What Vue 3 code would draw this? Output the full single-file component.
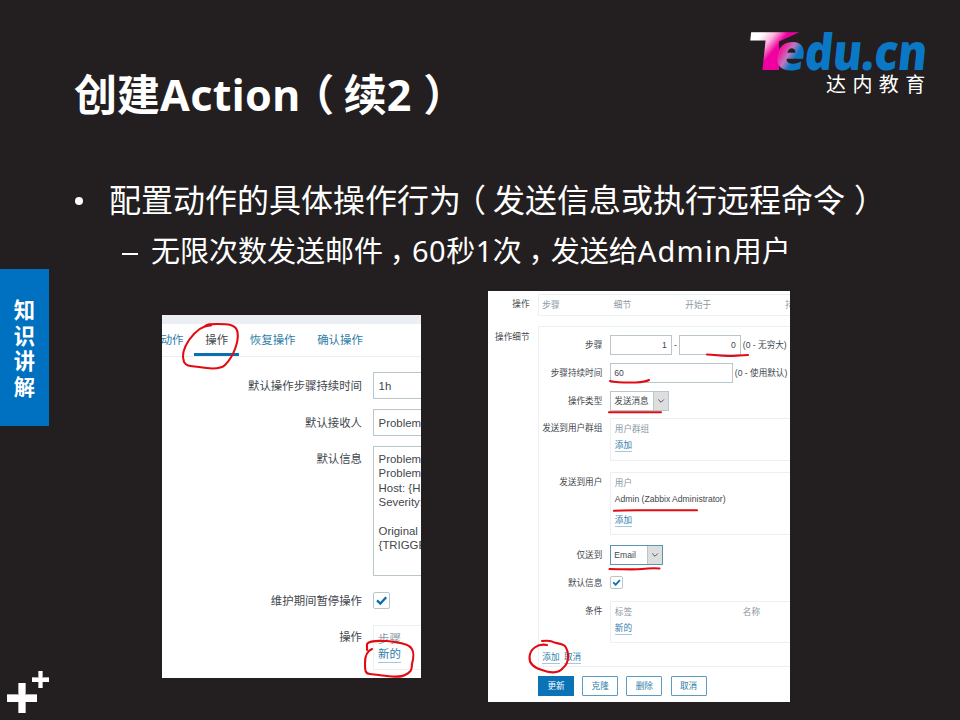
<script setup>
const sideChars = ['知', '识', '讲', '解']
const tabs = [
  { text: '动作', active: false },
  { text: '操作', active: true },
  { text: '恢复操作', active: false },
  { text: '确认操作', active: false }
]
const message = `Problem
Problem
Host: {H
Severity:

Original
{TRIGGE`
const buttons = ['克隆', '删除', '取消']
</script>

<template>
  <div class="slide">
    <aside class="side">
      <div class="side-tab">
        <span v-for="c in sideChars" :key="c">{{ c }}</span>
      </div>
      <svg class="pluses" width="42" height="42" viewBox="0 0 42 42" shape-rendering="crispEdges">
        <path class="plus-edge" d="M11 12h8v11h11v8H19v11h-8V31H0v-8h11z M31 0h5v6h6v5h-6v6h-5v-6h-6V6h6z" />
        <path class="plus" d="M12 12h6v12h12v7H18v11h-6V31H0v-7h12z M32 0h3v7h7v4h-7v6h-3v-6h-7V7h7z" />
      </svg>
    </aside>

    <main class="main">
      <header class="head">
        <h1>创建<span class="title-latin">Action</span><span class="open">（</span>续2<span class="close">）</span></h1>
        <svg class="logo" width="184" height="76" viewBox="0 0 184 76">
          <defs>
            <linearGradient id="gt" gradientUnits="userSpaceOnUse" x1="6" y1="-38" x2="34" y2="-18">
              <stop offset="0.2" stop-color="#ffffff" />
              <stop offset="0.5" stop-color="#fbb4dc" />
              <stop offset="0.8" stop-color="#f000a0" />
              <stop offset="1" stop-color="#f000a0" />
            </linearGradient>
            <linearGradient id="ge" gradientUnits="userSpaceOnUse" x1="0" y1="-18" x2="28" y2="-4">
              <stop offset="0.1" stop-color="#f5149b" />
              <stop offset="0.4" stop-color="#c078c0" />
              <stop offset="0.65" stop-color="#0a78c4" />
            </linearGradient>
            <clipPath id="taper"><path d="M0 0H56V5L33 15.500V50H0z" /></clipPath>
          </defs>
          <g clip-path="url(#taper)">
            <text class="logo-t" transform="translate(-1 44) skewX(-6)" textLength="52" lengthAdjust="spacingAndGlyphs" fill="url(#gt)">T</text>
          </g>
          <text class="logo-w" transform="translate(28 44) skewX(-6)" textLength="30" lengthAdjust="spacingAndGlyphs" fill="url(#ge)">e</text>
          <text class="logo-w" transform="translate(57.500 44) skewX(-6)" textLength="122" lengthAdjust="spacingAndGlyphs" fill="#0a78c4">du.cn</text>
          <text class="logo-cn" x="80" y="66">达内教育</text>
        </svg>
      </header>

      <ul class="points">
        <li class="lv1">
          <i class="dot"></i>
          <p>配置动作的具体操作行为<span class="open">（</span>发送信息或执行远程命令<span class="close">）</span></p>
        </li>
        <li class="lv2">
          <i class="dash"></i>
          <p>无限次数发送邮件<span class="comma">，</span><span class="digits">60秒1</span>次<span class="comma">，</span>发送给<span class="admin">Admin</span>用户</p>
        </li>
      </ul>

      <div class="shots">
        <section class="panel panel-a">
          <div class="strip"></div>
          <nav class="tabs">
            <span v-for="t in tabs" :key="t.text" class="tab" :class="{ active: t.active }">{{ t.text }}</span>
          </nav>
          <div class="row a1"><label>默认操作步骤持续时间</label><div class="field">1h</div></div>
          <div class="row a2"><label>默认接收人</label><div class="field">Problem</div></div>
          <div class="row a3"><label>默认信息</label><div class="area">{{ message }}</div></div>
          <div class="row a4">
            <label>维护期间暂停操作</label>
            <div class="check"><svg viewBox="0 0 16 16"><path d="M3.2 7.8 6.8 11.2 13 4.6" /></svg></div>
          </div>
          <div class="row a5">
            <label>操作</label>
            <div class="box"><span class="muted">步骤</span><a class="link">新的</a></div>
          </div>
          <svg class="marks" width="259" height="363" viewBox="0 0 259 363">
            <path d="M49 10.500C40 10 32 18 27 25C21 34 20 42 22 47C25 52 29 51 37 52C48 54 59 54 63 50C72 41 77 26 75.500 17C74 9 65 9 55 9C49 9 45 9 42 12" />
            <path d="M210 334C205 336 203 341 203 348C203 355 203 359 208 359C220 360 236 364 243 360C249 357 250 355 250 349C252 342 252 334 247 331C243 328 234 327 225 326C216 326 207 325 205 329L205 335" />
          </svg>
        </section>

        <section class="panel panel-b">
          <div class="row b0">
            <label>操作</label>
            <div class="thead"><span>步骤</span><span>细节</span><span>开始于</span><span>持续时间</span></div>
          </div>
          <div class="row b1">
            <label>操作细节</label>
            <div class="detail">
              <div class="row d1">
                <label>步骤</label>
                <div class="field num">1</div><span class="sep">-</span><div class="field num">0</div>
                <span class="hint">(0 - 无穷大)</span>
              </div>
              <div class="row d2">
                <label>步骤持续时间</label><div class="field wide">60</div><span class="hint">(0 - 使用默认)</span>
              </div>
              <div class="row d3">
                <label>操作类型</label>
                <div class="select"><span>发送消息</span><b><svg viewBox="0 0 8 8"><path d="M1.200 2.500 4 5.300 6.800 2.500" /></svg></b></div>
              </div>
              <div class="row d4">
                <label>发送到用户群组</label>
                <div class="box"><span class="muted">用户群组</span><a class="link">添加</a></div>
              </div>
              <div class="row d5">
                <label>发送到用户</label>
                <div class="box">
                  <span class="muted">用户</span><span class="person">Admin (Zabbix Administrator)</span><a class="link last">添加</a>
                </div>
              </div>
              <div class="row d6">
                <label>仅送到</label>
                <div class="select mail"><span>Email</span><b><svg viewBox="0 0 8 8"><path d="M1.200 2.500 4 5.300 6.800 2.500" /></svg></b></div>
              </div>
              <div class="row d7">
                <label>默认信息</label>
                <div class="check"><svg viewBox="0 0 16 16"><path d="M3.200 7.800 6.800 11.200 13 4.600" /></svg></div>
              </div>
              <div class="row d8">
                <label>条件</label>
                <div class="box">
                  <div class="cols muted"><span>标签</span><span>名称</span></div>
                  <a class="link">新的</a>
                </div>
              </div>
              <div class="acts"><a class="link">添加</a><a class="link">取消</a></div>
            </div>
          </div>
          <div class="btns">
            <button class="btn primary">更新</button>
            <button v-for="b in buttons" :key="b" class="btn">{{ b }}</button>
          </div>
          <svg class="marks" width="302" height="411" viewBox="0 0 302 411">
            <path d="M219 63.500C226 63.500 232 65 240 65C248 65 254 64 260 64" />
            <path d="M122 90C131 92 142 91.500 148 91.500C155 91 158 90.500 161 89" />
            <path d="M121 121.300H173" />
            <path d="M126 219.800C136 219 150 219.300 161 219.300H209" />
            <path d="M121.500 278C134 278 145 279 154 278C162 277 166 277 171.500 277.500" />
            <path d="M59 354C50 352 42 358 41.500 366C41 373 47 377 54 379C61 382 70 383 75 377C82 371 81 361 77 355C72 351 67 353 64 350.500C61 349.500 58 349.700 54 350" />
          </svg>
        </section>
      </div>
    </main>
  </div>
</template>

<style>
body {
  margin: 0;
  background: #231f20;
}
</style>

<style scoped>
* {
  box-sizing: border-box;
}
.slide {
  width: 960px;
  height: 720px;
  display: flex;
  overflow: hidden;
  background: #231f20;
  color: #fff;
  font-family: "Noto Sans", "Noto Sans CJK SC", sans-serif;
}
.side {
  width: 49px;
  flex: none;
  display: flex;
  flex-direction: column;
  justify-content: space-between;
  padding: 269px 0 7px;
}
.side-tab {
  height: 157px;
  background: #0070c0;
  display: flex;
  flex-direction: column;
  align-items: center;
  padding-top: 27px;
  font-family: "Noto Sans CJK SC", sans-serif;
  font-size: 21.3px;
  font-weight: 700;
  line-height: 25.6px;
}
.pluses {
  display: block;
  margin-left: 7px;
}
.plus { fill: #fff; }
.plus-edge { fill: #b0aeaf; }
.main {
  flex: 1;
  min-width: 0;
}
.head {
  display: flex;
  justify-content: space-between;
  align-items: flex-start;
  height: 176px;
  padding: 26px 30px 0 25px;
}
h1 {
  margin: 39px 0 0;
  font-size: 43px;
  line-height: 60px;
  font-weight: 700;
  white-space: nowrap;
}
.title-latin { letter-spacing: 0.4px; }
.open { margin: 0 0.22em 0 -0.22em; }
.close { margin-left: 0.28em; }
.comma { margin: 0 -0.23em 0 0.23em; }
.logo {
  display: block;
  overflow: visible;
}
.logo-t, .logo-w {
  font-family: "Noto Sans", sans-serif;
  font-weight: 900;
}
.logo-t { font-size: 53px; }
.logo-w { font-size: 50px; }
.logo-cn {
  font-family: "Noto Sans CJK SC", sans-serif;
  font-size: 20px;
  letter-spacing: 6.4px;
  fill: #fff;
}
.points {
  list-style: none;
  margin: 0;
  padding: 0;
  height: 115px;
  white-space: nowrap;
}
.points li {
  display: flex;
  align-items: center;
}
.points p { margin: 0; }
.lv1 {
  height: 50px;
  padding: 0 0 6px 26px;
  font-size: 32px;
}
.lv2 {
  height: 50px;
  padding: 0 0 4px 73px;
  font-size: 29px;
}
.dot {
  width: 8px;
  height: 8px;
  border-radius: 50%;
  background: #fff;
  margin: 5px 26px 0 0;
}
.dash {
  width: 16px;
  height: 2px;
  background: #fff;
  margin: 9px 13px 0 0;
}
.digits { letter-spacing: 0.5px; }
.admin { letter-spacing: 1.2px; }
.shots {
  display: flex;
  align-items: flex-start;
  gap: 67px;
  padding-left: 113px;
}
.panel {
  position: relative;
  overflow: hidden;
  background: #fff;
  color: #3f474d;
  font-family: "Liberation Sans", "Noto Sans CJK SC", sans-serif;
  white-space: nowrap;
}
.panel-a {
  width: 259px;
  height: 363px;
  margin-top: 24px;
  font-size: 11.4px;
  line-height: 16px;
}
.panel-b {
  width: 302px;
  height: 411px;
  font-size: 8.6px;
  line-height: 12px;
}
.marks {
  position: absolute;
  left: 0;
  top: 0;
}
.marks path {
  fill: none;
  stroke: #e30b13;
  stroke-width: 2.1;
  stroke-linecap: round;
  stroke-linejoin: round;
}
.row {
  display: flex;
  align-items: flex-start;
}
.row label {
  flex: none;
  text-align: right;
}
.field, .area, .select {
  border: 1px solid #b9c6cb;
  flex: none;
}
.box {
  border: 1px solid #edf0f1;
  display: flex;
  flex-direction: column;
  align-items: flex-start;
  flex: none;
}
.muted { color: #8a979f; }
.link {
  color: #2f7da8;
  border-bottom: 1px solid #a6c8db;
}
.check {
  border: 1px solid #b9c6cb;
  border-radius: 2px;
  flex: none;
}
.check svg {
  display: block;
  width: 100%;
  height: 100%;
}
.check path {
  fill: none;
  stroke: #0a6fae;
  stroke-width: 2.5;
}

.strip {
  height: 9px;
  background: #ebeef2;
}
.tabs {
  display: flex;
  height: 33px;
  border-bottom: 1px solid #ebedee;
  margin-left: -12.2px;
}
.tab {
  padding: 8px 10.9px 0;
  height: 32px;
  color: #2f7da8;
  border-bottom: 3px solid transparent;
}
.tab.active {
  color: #3f474d;
  border-color: #0a6fae;
}
.panel-a label { width: 200px; margin-right: 10.6px; }
.panel-a .field {
  width: 120px;
  height: 27px;
  padding: 5px;
}
.a1 { margin-top: 15px; height: 37px; }
.a1 label, .a2 label { padding-top: 5.5px; }
.a2 { height: 37px; }
.area {
  width: 120px;
  height: 130px;
  padding: 5px;
  line-height: 14.4px;
  white-space: pre;
}
.a3 { height: 146px; }
.a3 label { padding-top: 5px; }
.a4 { height: 33px; }
.a4 label { padding-top: 1px; }
.panel-a .check { width: 17px; height: 17px; }
.panel-a .box {
  width: 120px;
  height: 45px;
  padding: 5px 4.5px 0;
}
.panel-a .a5 label { padding-top: 4px; }
.panel-a .box .link { line-height: 15px; margin-top: 0; }

.b0 > label, .b1 > label { width: 41.5px; margin-right: 8.8px; }
.b0 { height: 25px; padding-top: 3px; }
.b0 > label { padding-top: 4px; }
.thead {
  width: 300px;
  height: 22px;
  border: 1px solid #edf0f1;
  padding: 4px 0 0 3px;
  display: grid;
  grid-template-columns: 71.5px 71.5px 100px 60px;
  color: #8a979f;
}
.b1 { margin-top: 10px; height: 341px; }
.b1 > label { padding-top: 4.5px; }
.detail {
  width: 300px;
  height: 341px;
  border: 1px solid #edf0f1;
}
.detail .row label { width: 63px; margin-right: 8px; }
.panel-b .field { height: 20px; padding: 3px; }
.num { width: 61.5px; text-align: right; }
.panel-b .num { padding-right: 4px; }
.sep { width: 7.5px; text-align: center; padding-top: 4px; }
.hint { margin-left: 2px; padding-top: 4px; }
.wide { width: 122.5px; }
.d1 { margin-top: 8px; height: 28px; }
.d2 { height: 28px; }
.d3 { height: 27px; }
.d1 label, .d2 label, .d3 label, .d6 label { padding-top: 4px; }
.select {
  display: flex;
  width: 58.5px;
  height: 20px;
}
.select span {
  flex: 1;
  padding: 3px 0 0 3px;
}
.select b {
  width: 14.5px;
  display: flex;
  align-items: center;
  justify-content: center;
  background: #dcdedf;
  border-left: 1px solid #b9c6cb;
}
.select b svg { width: 8px; height: 8px; }
.select path { fill: none; stroke: #555; stroke-width: 1; }
.select.mail { width: 52.5px; border-color: #5d94b1; }
.panel-b .box { width: 240px; padding: 4px 0 0 3.5px; }
.d4 { height: 54px; }
.d4 label, .d5 label, .d8 label { padding-top: 4px; }
.d4 .box { height: 43px; }
.d5 { height: 73px; }
.d5 .box { height: 63px; }
.panel-b .link { line-height: 11px; }
.d4 .link, .d8 .link { margin-top: 5px; }
.person { margin-top: 4px; }
.d5 .last { margin-top: 10px; }
.d6 { height: 31px; }
.d7 { height: 25px; }
.d7 label { padding-top: 1px; }
.panel-b .check { width: 13px; height: 13px; }
.d8 .box { height: 42px; }
.d8 { height: 50px; }
.cols {
  display: grid;
  grid-template-columns: 128px 60px;
}
.acts {
  display: flex;
  gap: 4.5px;
  padding: 1px 0 0 3px;
}
.btns {
  display: flex;
  gap: 8.2px;
  margin: 9px 0 0 50px;
}
.btn {
  width: 36px;
  height: 20px;
  padding: 0;
  border: 1px solid #5d9cc0;
  border-radius: 1px;
  background: #fff;
  color: #2f7da8;
  font: inherit;
}
.btn.primary {
  background: #0a73b6;
  border-color: #0a73b6;
  border-radius: 0;
  color: #fff;
}
</style>
